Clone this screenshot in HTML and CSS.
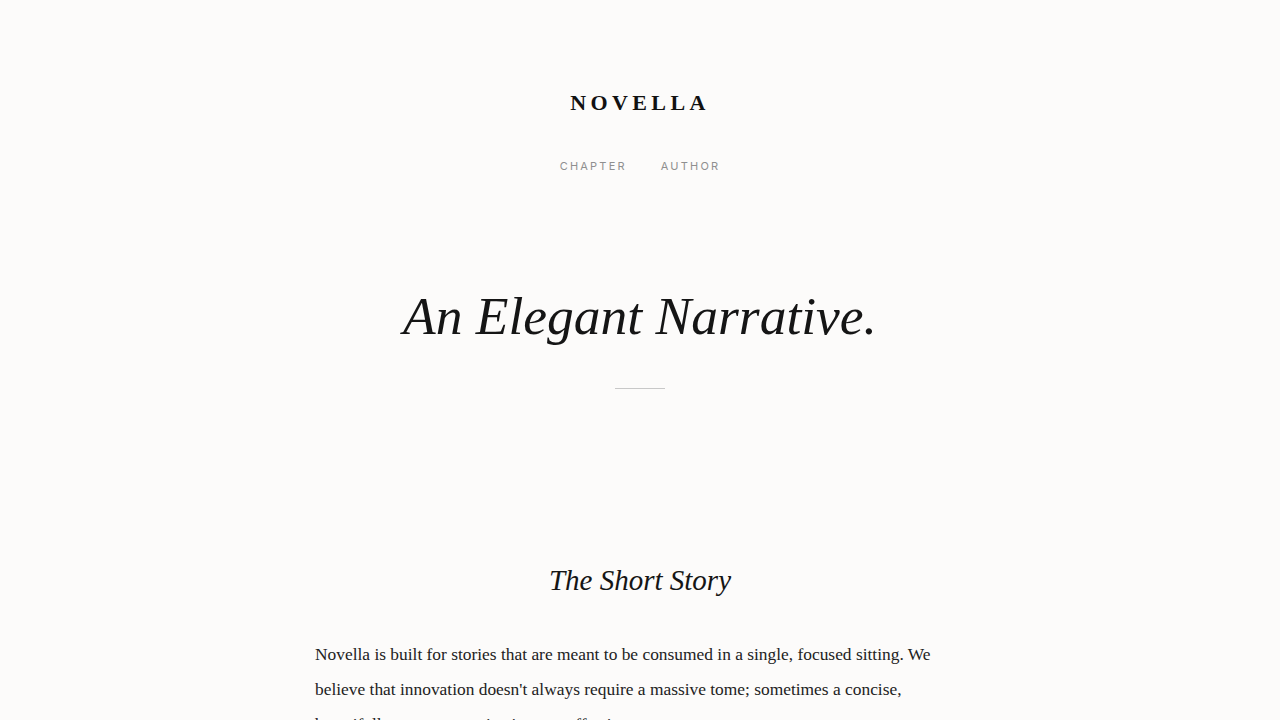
FILE: index.html
```html
<!DOCTYPE html>
<html lang="en">
<head>
<meta charset="utf-8">
<title>Novella</title>
<link rel="stylesheet" href="styles.css">
</head>
<body>
<header class="site-header">
  <div class="brand">NOVELLA</div>
  <nav class="nav">
    <a href="#" class="nav-link">CHAPTER</a>
    <a href="#" class="nav-link">AUTHOR</a>
  </nav>
</header>
<main>
  <section class="hero">
    <h1 class="hero-title">An Elegant Narrative.</h1>
    <div class="divider"></div>
  </section>
  <section class="story">
    <h2 class="story-title">The Short Story</h2>
    <p class="story-text">Novella is built for stories that are meant to be consumed in a single, focused sitting. We believe that innovation doesn't always require a massive tome; sometimes a concise, beautifully woven narrative is more effective.</p>
  </section>
</main>
</body>
</html>
```
FILE: styles.css
```css
* { box-sizing: border-box; }
html, body { margin: 0; padding: 0; }
body {
  background: #fcfbfa;
  color: #1a1a1a;
  font-family: "Liberation Serif", "Times New Roman", serif;
}
.site-header {
  display: flex;
  flex-direction: column;
  align-items: center;
  padding-top: 89px;
}
.brand {
  font-weight: 700;
  font-size: 22px;
  letter-spacing: 0.2em;
  line-height: 28px;
  color: #111;
}
.nav {
  display: flex;
  gap: 34px;
  margin-top: 42px;
}
.nav-link {
  font-family: Inter, "Liberation Sans", sans-serif;
  font-size: 11px;
  letter-spacing: 0.2em;
  color: #8f8f8f;
  text-decoration: none;
  line-height: 14px;
}
.hero {
  display: flex;
  flex-direction: column;
  align-items: center;
  padding-top: 105px;
}
.hero-title {
  margin: 0;
  font-style: italic;
  font-weight: 400;
  font-size: 53.5px;
  line-height: 76px;
  color: #151515;
}
.divider {
  width: 50px;
  height: 1px;
  background: #c8c8c8;
  margin-top: 34px;
}
.story {
  width: 650px;
  margin: 0 auto;
  padding-top: 170px;
}
.story-title {
  margin: 0;
  text-align: center;
  font-style: italic;
  font-weight: 400;
  font-size: 29px;
  line-height: 42px;
  color: #151515;
}
.story-text {
  margin: 36px 0 0;
  font-size: 17.4px;
  line-height: 35px;
  color: #222;
}
```
